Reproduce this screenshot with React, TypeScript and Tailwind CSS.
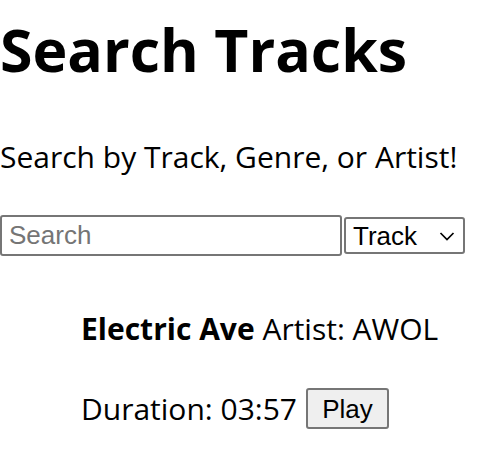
import React, { useState } from 'react';

const tracks = [{ name: 'Electric Ave', artist: 'AWOL', duration: '03:57' }];

const App: React.FC = () => {
  const [query, setQuery] = useState('');
  const [field, setField] = useState('Track');

  return (
    <div className="min-h-[456px] bg-white text-black font-['Segoe_UI','Open_Sans',sans-serif]">
      <h1 className="pt-[20px] text-[59px] font-bold leading-none">Search Tracks</h1>
      <p className="mt-[63px] text-[30px] leading-none">Search by Track, Genre, or Artist!</p>

      <div className="mt-[43px] flex items-center gap-[2px]">
        <input
          type="text"
          value={query}
          onChange={(e) => setQuery(e.target.value)}
          placeholder="Search"
          className="h-[41px] w-[342px] rounded-[3px] border-2 border-[#767676] bg-white px-[7px] font-['Liberation_Sans',Arial,sans-serif] text-[26px] text-black placeholder:text-[#757575]"
        />
        <div className="relative h-[37px] w-[121px] rounded-[3px] border-2 border-[#767676] bg-white">
          <select
            value={field}
            onChange={(e) => setField(e.target.value)}
            className="h-full w-full appearance-none bg-transparent pl-[7px] font-['Liberation_Sans',Arial,sans-serif] text-[26px] leading-none outline-none"
          >
            <option>Track</option>
            <option>Genre</option>
            <option>Artist</option>
          </select>
          <svg className="pointer-events-none absolute right-[8px] top-[12px] h-[10px] w-[16px]" viewBox="0 0 16 10" fill="none" stroke="#000" strokeWidth={1.7}>
            <path d="M1.5 2l6.5 6.5L14.5 2" />
          </svg>
        </div>
      </div>

      <ul className="mt-[58px] pl-[81px] text-[30px]">
        {tracks.map((t) => (
          <li key={t.name}>
            <p className="leading-none">
              <span className="font-bold">{t.name}</span> Artist: {t.artist}
            </p>
            <div className="mt-[44px] flex items-center gap-[9px] leading-none">
              <span>Duration: {t.duration}</span>
              <button
                type="button"
                className="h-[41px] w-[83px] rounded-[3px] border-2 border-[#767676] bg-[#efefef] font-['Liberation_Sans',Arial,sans-serif] text-[26px] leading-none"
              >
                Play
              </button>
            </div>
          </li>
        ))}
      </ul>
    </div>
  );
};

export default App;
